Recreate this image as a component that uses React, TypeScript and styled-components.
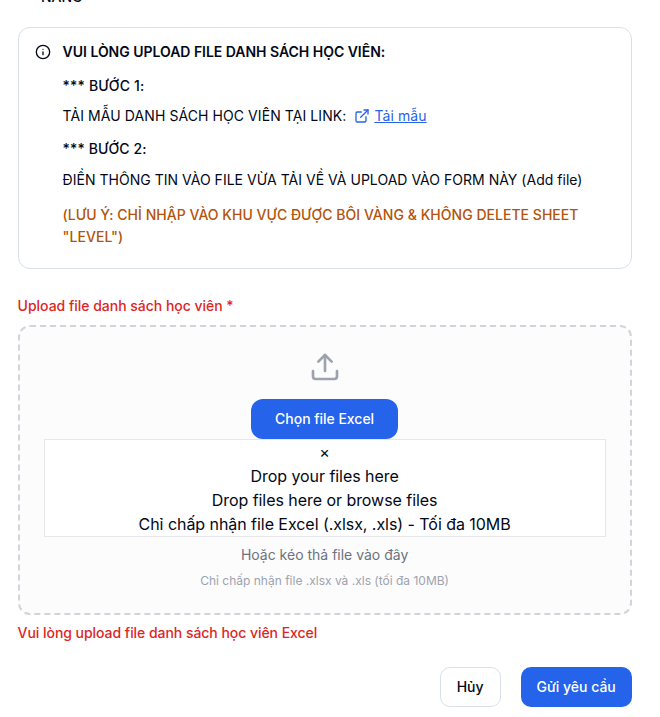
import React from "react";
import styled, { createGlobalStyle } from "styled-components";
import { Info, ExternalLink, Upload } from "lucide-react";

const GlobalStyle = createGlobalStyle`
  *, *::before, *::after { box-sizing: border-box; }
  body { margin: 0; background: #fff; color: #020817; font-family: Inter, "Liberation Sans", sans-serif; font-size: 16px; line-height: 24px; overflow: hidden; }
  p { margin: 0; }
`;

const Page = styled.main`
  height: 717px;
  padding: 0 28.4px 0 17.6px;
  overflow: hidden;
`;

const PreviousLine = styled.div`
  display: flex;
  align-items: flex-start;
  height: 27px;
  padding-left: 23.4px;
  font-size: 14px;
  font-weight: 500;
  line-height: 20px;
`;

const PreviousText = styled.p`
  margin-top: -13px;
`;

const Notice = styled.section`
  display: flex;
  gap: 12px;
  height: 242px;
  padding: 16px;
  border: 1px solid #dadfec;
  border-radius: 12px;
  font-size: 14px;
  svg { flex: none; }
`;

const NoticeBody = styled.div`
  flex: 1;
`;

const Title = styled.p`
  margin-top: -2px;
  line-height: 20px;
  font-weight: 600;
  letter-spacing: -0.025px;
`;

const Line = styled.p<{ $gap: number; $medium?: boolean; $tracking?: number }>`
  margin-top: ${(p) => p.$gap}px;
  line-height: 22px;
  font-weight: ${(p) => (p.$medium ? 500 : 400)};
  letter-spacing: ${(p) => p.$tracking ?? 0}px;
`;

const LinkLine = styled(Line)`
  display: flex;
  align-items: center;
  height: 22px;
`;

const Warning = styled(Line)`
  color: #b45309;
`;

const TemplateLink = styled.a`
  display: inline-flex;
  align-items: center;
  gap: 4px;
  margin-left: 8px;
  color: #2563eb;
  text-decoration: underline;
`;

const Label = styled.p`
  margin-top: 27px;
  color: #dc2626;
  font-size: 14px;
  font-weight: 500;
  line-height: 20px;
  letter-spacing: -0.02px;
`;

const DropArea = styled.section`
  display: flex;
  flex-direction: column;
  align-items: center;
  height: 290px;
  margin-top: 9px;
  padding: 24px;
  border: 2px dashed #d1d5db;
  border-radius: 12px;
  background: #fcfcfc;
`;

const Button = styled.button<{ $width: number; $primary?: boolean }>`
  width: ${(p) => p.$width}px;
  height: 40px;
  padding: 0;
  border: ${(p) => (p.$primary ? "0" : "1px solid #dadfec")};
  border-radius: 10px;
  background: ${(p) => (p.$primary ? "#2563eb" : "#fff")};
  color: ${(p) => (p.$primary ? "#fff" : "#020817")};
  font: 500 14px/20px Inter, sans-serif;
`;

const ChooseButton = styled(Button)`
  margin-top: 16px;
  border-radius: 12px;
  letter-spacing: -0.03px;
`;

const DropBox = styled.div`
  width: 100%;
  height: 98px;
  border: 1px solid #e5e7eb;
  background: #fff;
  text-align: center;
  letter-spacing: -0.05px;
`;

const Hint = styled.p<{ $small?: boolean }>`
  margin-top: ${(p) => (p.$small ? 8 : 8)}px;
  color: ${(p) => (p.$small ? "#9ca3af" : "#6b7280")};
  font-size: ${(p) => (p.$small ? 12 : 14)}px;
  line-height: ${(p) => (p.$small ? 16 : 20)}px;
`;

const ErrorText = styled.p`
  margin-top: 8px;
  color: #dc2626;
  font-size: 14px;
  font-weight: 500;
  line-height: 20px;
  letter-spacing: -0.045px;
`;

const Actions = styled.footer`
  display: flex;
  justify-content: flex-end;
  gap: 20px;
  margin-top: 24px;
`;

export default function App() {
  return (
    <Page>
      <GlobalStyle />
      <PreviousLine><PreviousText>NĂNG</PreviousText></PreviousLine>
      <Notice>
        <Info size={16} />
        <NoticeBody>
          <Title>VUI LÒNG UPLOAD FILE DANH SÁCH HỌC VIÊN:</Title>
          <Line $gap={13} $medium $tracking={0.18}>*** BƯỚC 1:</Line>
          <LinkLine $gap={8} $tracking={0.08}>TẢI MẪU DANH SÁCH HỌC VIÊN TẠI LINK: <TemplateLink href="#"><ExternalLink size={16} />Tải mẫu</TemplateLink></LinkLine>
          <Line $gap={11} $medium $tracking={0.12}>*** BƯỚC 2:</Line>
          <Line $gap={9} $tracking={0.02}>ĐIỀN THÔNG TIN VÀO FILE VỪA TẢI VỀ VÀ UPLOAD VÀO FORM NÀY (Add file)</Line>
          <Warning $gap={13} $medium $tracking={0.03}>(LƯU Ý: CHỈ NHẬP VÀO KHU VỰC ĐƯỢC BÔI VÀNG &amp; KHÔNG DELETE SHEET "LEVEL")</Warning>
        </NoticeBody>
      </Notice>
      <Label>Upload file danh sách học viên *</Label>
      <DropArea>
        <Upload size={32} color="#9ca3af" />
        <ChooseButton $width={147} $primary>Chọn file Excel</ChooseButton>
        <DropBox>
          <p>×</p>
          <p>Drop your files here</p>
          <p>Drop files here or browse files</p>
          <p>Chỉ chấp nhận file Excel (.xlsx, .xls) - Tối đa 10MB</p>
        </DropBox>
        <Hint>Hoặc kéo thả file vào đây</Hint>
        <Hint $small>Chỉ chấp nhận file .xlsx và .xls (tối đa 10MB)</Hint>
      </DropArea>
      <ErrorText>Vui lòng upload file danh sách học viên Excel</ErrorText>
      <Actions>
        <Button $width={61}>Hủy</Button>
        <Button $width={111} $primary>Gửi yêu cầu</Button>
      </Actions>
    </Page>
  );
}
